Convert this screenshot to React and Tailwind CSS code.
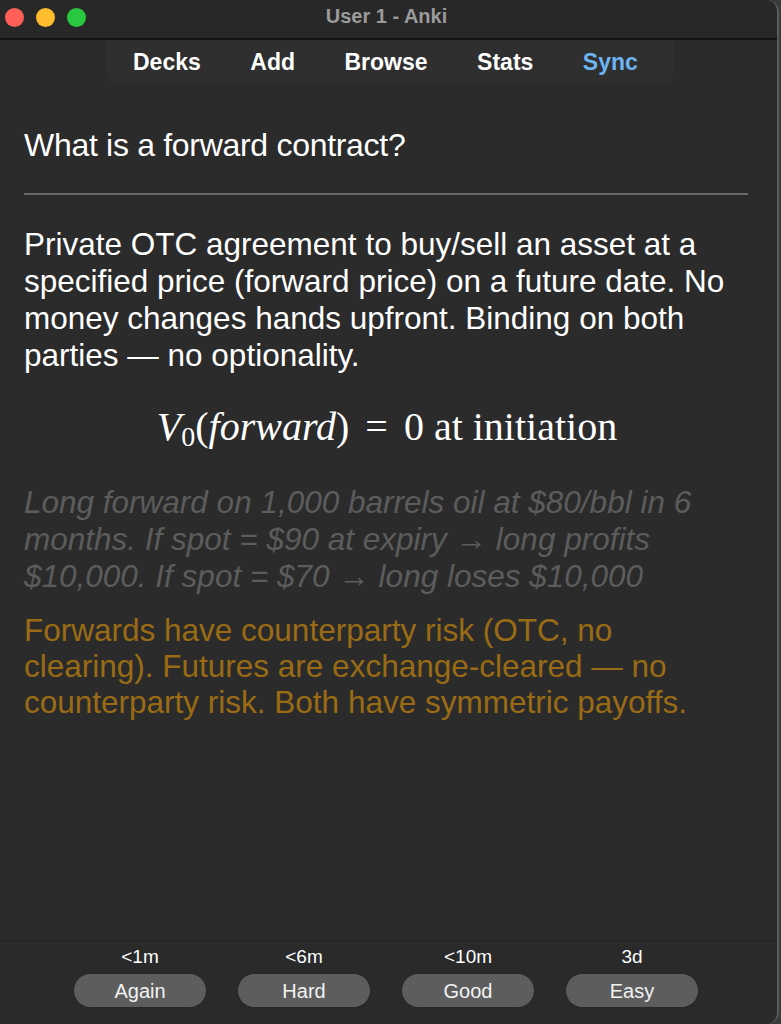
import React from "react";

const answers = [
  { due: "<1m", label: "Again" },
  { due: "<6m", label: "Hard" },
  { due: "<10m", label: "Good" },
  { due: "3d", label: "Easy" },
];

const tabs = [
  { label: "Decks", active: false },
  { label: "Add", active: false },
  { label: "Browse", active: false },
  { label: "Stats", active: false },
  { label: "Sync", active: true },
];

export default function App() {
  return (
    <div className="w-[781px] h-[1024px] bg-[#3a3a3a] overflow-hidden font-['Liberation_Sans',Arial,sans-serif]">
      <div className="w-[779px] h-[1024px] flex flex-col bg-[#2b2b2b] rounded-r-[12px] border-r-2 border-[#5a5a5a]">
        {/* title bar */}
        <div className="relative h-[40px] shrink-0 bg-[#282828] border-b-2 border-[#141414] flex items-center justify-center rounded-tr-[12px]">
          <div className="absolute left-[5px] top-[8px] flex gap-[12px]">
            <span className="w-[19px] h-[19px] rounded-full bg-[#fe5f57]" />
            <span className="w-[19px] h-[19px] rounded-full bg-[#febc2e]" />
            <span className="w-[19px] h-[19px] rounded-full bg-[#28c840]" />
          </div>
          <span className="text-[20px] font-bold text-[#9b9b9b] -mt-[6px] -ml-[4px]">User 1 - Anki</span>
        </div>

        {/* toolbar */}
        <div className="flex justify-center shrink-0">
          <div className="ml-[4px] w-[567px] h-[44px] bg-[#2f2f2f] rounded-b-[12px] flex items-center pl-[26px] gap-[49.5px]">
            {tabs.map((t) => (
              <span
                key={t.label}
                className={`text-[23px] font-bold ${t.active ? "text-[#6cb4f2]" : "text-white"}`}
              >
                {t.label}
              </span>
            ))}
          </div>
        </div>

        {/* card */}
        <div className="flex-1 px-[24px] pt-[45px]">
          <p className="text-[32px] text-white leading-[32px] tracking-[-0.3px]">What is a forward contract?</p>
          <div className="h-[2px] bg-[#6a6a6a] mt-[32px] mr-[5px]" />
          <p className="mt-[31px] text-[31.5px] leading-[37px] text-white whitespace-nowrap">
            Private OTC agreement to buy/sell an asset at a<br />
            specified price (forward price) on a future date. No<br />
            money changes hands upfront. Binding on both<br />
            parties — no optionality.
          </p>
          <div className="mt-[30px] h-[46px] flex items-center justify-center text-white text-[40px] font-['Liberation_Serif',serif] pr-[3px]">
            <span>
              <i>V</i>
              <span className="text-[28px] relative top-[6px]">0</span>
              <span>(</span>
              <i>forward</i>
              <span>)</span>
              <span className="mx-[16px]">=</span>
              <span>0 at initiation</span>
            </span>
          </div>
          <p className="mt-[34px] text-[31.5px] leading-[37px] italic text-[#5c5c5c] whitespace-nowrap">
            Long forward on 1,000 barrels oil at $80/bbl in 6<br />
            months. If spot = $90 at expiry → long profits<br />
            $10,000. If spot = $70 → long loses $10,000
          </p>
          <p className="mt-[17px] text-[31.5px] leading-[36px] text-[#9a6b14] whitespace-nowrap">
            Forwards have counterparty risk (OTC, no<br />
            clearing). Futures are exchange-cleared — no<br />
            counterparty risk. Both have symmetric payoffs.
          </p>
        </div>

        {/* answer bar */}
        <div className="h-[84px] shrink-0 border-t border-[#222] bg-[#2a2a2a] rounded-br-[12px] flex pl-[73px] gap-[30px] pt-[5px]">
          {answers.map((a) => (
            <div key={a.label} className="flex flex-col items-center w-[134px]">
              <span className="text-[19px] leading-[22px] text-white">{a.due}</span>
              <button className="mt-[5px] w-[134px] h-[35px] rounded-full bg-[#5d5d5d] border border-[#262626] text-[20px] text-[#f2f2f2]">
                {a.label}
              </button>
            </div>
          ))}
        </div>
      </div>
    </div>
  );
}
